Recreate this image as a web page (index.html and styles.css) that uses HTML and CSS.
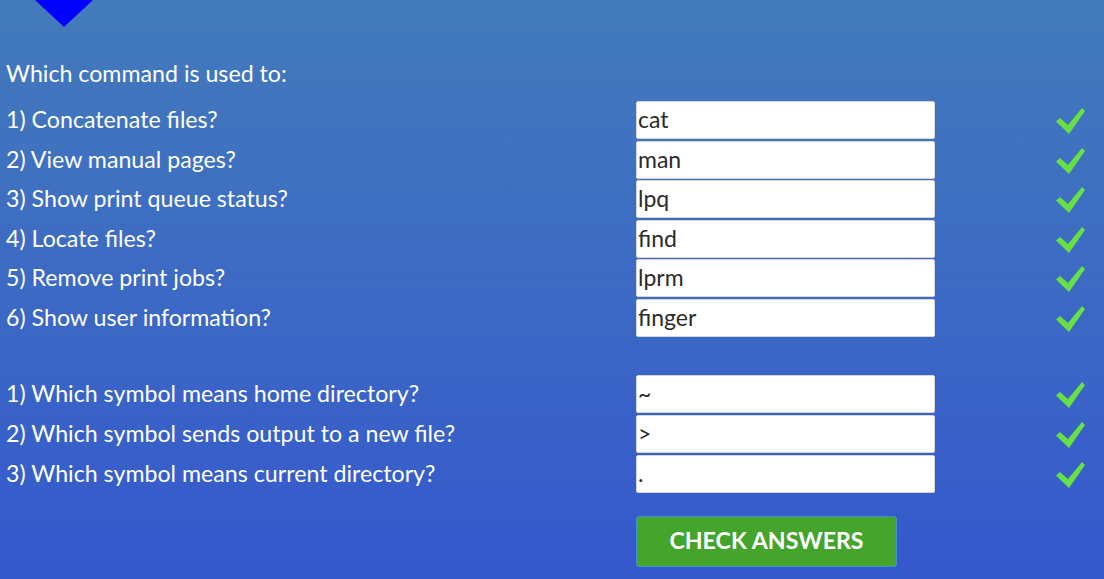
FILE: index.html
```html
<!DOCTYPE html>
<html lang="en">
<head>
<meta charset="utf-8">
<title>Quiz</title>
<link rel="stylesheet" href="styles.css">
</head>
<body>
<div class="page">
  <div class="tri"></div>
  <p class="title">Which command is used to:</p>
  <div class="group group-one">
    <div class="row"><span class="label">1) Concatenate files?</span><input class="answer" type="text" value="cat"><span class="check"><svg viewBox="0 0 30 28" width="30" height="28"><path d="M1 14.5 L5 11 L13 18 L27 1 L30 4 L14 27 Z" fill="#67e046"/></svg></span></div>
    <div class="row"><span class="label">2) View manual pages?</span><input class="answer" type="text" value="man"><span class="check"><svg viewBox="0 0 30 28" width="30" height="28"><path d="M1 14.5 L5 11 L13 18 L27 1 L30 4 L14 27 Z" fill="#67e046"/></svg></span></div>
    <div class="row"><span class="label">3) Show print queue status?</span><input class="answer" type="text" value="lpq"><span class="check"><svg viewBox="0 0 30 28" width="30" height="28"><path d="M1 14.5 L5 11 L13 18 L27 1 L30 4 L14 27 Z" fill="#67e046"/></svg></span></div>
    <div class="row"><span class="label">4) Locate files?</span><input class="answer" type="text" value="find"><span class="check"><svg viewBox="0 0 30 28" width="30" height="28"><path d="M1 14.5 L5 11 L13 18 L27 1 L30 4 L14 27 Z" fill="#67e046"/></svg></span></div>
    <div class="row"><span class="label">5) Remove print jobs?</span><input class="answer" type="text" value="lprm"><span class="check"><svg viewBox="0 0 30 28" width="30" height="28"><path d="M1 14.5 L5 11 L13 18 L27 1 L30 4 L14 27 Z" fill="#67e046"/></svg></span></div>
    <div class="row"><span class="label">6) Show user information?</span><input class="answer" type="text" value="finger"><span class="check"><svg viewBox="0 0 30 28" width="30" height="28"><path d="M1 14.5 L5 11 L13 18 L27 1 L30 4 L14 27 Z" fill="#67e046"/></svg></span></div>
  </div>
  <div class="group group-two">
    <div class="row"><span class="label">1) Which symbol means home directory?</span><input class="answer" type="text" value="~"><span class="check"><svg viewBox="0 0 30 28" width="30" height="28"><path d="M1 14.5 L5 11 L13 18 L27 1 L30 4 L14 27 Z" fill="#67e046"/></svg></span></div>
    <div class="row"><span class="label">2) Which symbol sends output to a new file?</span><input class="answer" type="text" value="&gt;"><span class="check"><svg viewBox="0 0 30 28" width="30" height="28"><path d="M1 14.5 L5 11 L13 18 L27 1 L30 4 L14 27 Z" fill="#67e046"/></svg></span></div>
    <div class="row"><span class="label">3) Which symbol means current directory?</span><input class="answer" type="text" value="."><span class="check"><svg viewBox="0 0 30 28" width="30" height="28"><path d="M1 14.5 L5 11 L13 18 L27 1 L30 4 L14 27 Z" fill="#67e046"/></svg></span></div>
  </div>
  <div class="actions">
    <button class="btn" type="button">CHECK ANSWERS</button>
  </div>
</div>
</body>
</html>
```

FILE: styles.css
```css
html, body {
  margin: 0;
  padding: 0;
  height: 100%;
}
body {
  background: linear-gradient(180deg, #437bbb 0%, #3558cd 100%);
  font-family: "Lato", "Liberation Sans", sans-serif;
  color: #fff;
  overflow: hidden;
}
.page {
  padding-left: 6px;
}
.tri {
  width: 0;
  height: 0;
  margin-left: 29px;
  border-left: 29px solid transparent;
  border-right: 29px solid transparent;
  border-top: 27px solid #0000ff;
}
.title {
  margin: 33px 0 0;
  font-size: 23.2px;
  line-height: 26px;
}
.group {
  display: flex;
  flex-direction: column;
}
.group-one {
  margin-top: 15px;
}
.group-one .row {
  height: 39.6px;
}
.group-two {
  margin-top: 36px;
}
.group-two .row {
  height: 40px;
}
.row {
  display: grid;
  grid-template-columns: 630px 300px 1fr;
  align-items: start;
}
.label {
  font-size: 23.2px;
  line-height: 36px;
}
.answer {
  box-sizing: border-box;
  width: 299px;
  height: 38px;
  margin: 0;
  padding: 0 0 2px 1px;
  border: 1px solid #d6d6d6;
  border-radius: 2px;
  background: #fff;
  font-family: "Lato", "Liberation Sans", sans-serif;
  font-size: 23px;
  color: #2b2b2b;
  outline: none;
}
.check {
  display: flex;
  align-items: center;
  height: 38px;
  margin-left: 119px;
}
.check svg {
  display: block;
  margin-top: 2px;
}
.actions {
  margin-top: 21px;
  padding-left: 630px;
}
.btn {
  box-sizing: border-box;
  width: 261px;
  height: 51px;
  margin: 0;
  padding: 0 0 2px;
  border: 1px solid #3f93c8;
  border-radius: 3px;
  background: #44a42b;
  color: #fff;
  font-family: "Lato", "Liberation Sans", sans-serif;
  font-weight: 700;
  font-size: 23.2px;
  cursor: pointer;
}
```
